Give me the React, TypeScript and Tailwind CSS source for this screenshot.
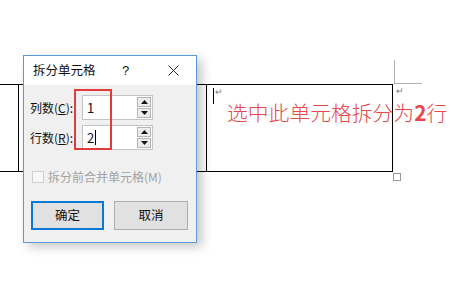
import React from 'react'

const FONT = { fontFamily: '"Noto Sans CJK SC", "Noto Sans", sans-serif' }

function Spinner() {
  return (
    <div className="flex h-full w-[15px] flex-col gap-[1px] py-[1px] pr-[1px]">
      <div className="flex flex-1 items-center justify-center border border-[#b5b5b5] bg-[#ececec]">
        <svg width="7" height="4" viewBox="0 0 7 4">
          <polygon points="3.5,0 7,4 0,4" fill="#111" />
        </svg>
      </div>
      <div className="flex flex-1 items-center justify-center border border-[#b5b5b5] bg-[#ececec]">
        <svg width="7" height="4" viewBox="0 0 7 4">
          <polygon points="0,0 7,0 3.5,4" fill="#111" />
        </svg>
      </div>
    </div>
  )
}

function NumberRow({ label, hotkey, value, caret }: { label: string; hotkey: string; value: string; caret?: boolean }) {
  return (
    <div className="flex h-[25px] items-center">
      <div className="w-[52px] text-[12px] text-[#111]">
        {label}(<span className="underline">{hotkey}</span>):
      </div>
      <div className="flex h-full w-[71px] items-center border border-[#c4c4c4] bg-white">
        <div className="flex flex-1 items-center pl-[4px] text-[13px] text-[#111]">
          {value}
          {caret && <span className="ml-[1px] inline-block h-[15px] w-[1px] bg-black" />}
        </div>
        <Spinner />
      </div>
    </div>
  )
}

function SplitDialog() {
  return (
    <div className="absolute left-[23px] top-[55px] flex h-[188px] w-[174px] flex-col border border-[#5b9bd5] bg-[#f0f0f0] shadow-[5px_4px_10px_rgba(0,0,0,0.22)]">
      {/* Title bar */}
      <div className="flex h-[29px] items-center bg-white pl-[9px] text-[12.5px] text-[#111]">
        <span className="flex-1">拆分单元格</span>
        <span className="w-[46px] text-[13px]" style={{ fontFamily: '"Liberation Sans", sans-serif' }}>?</span>
        <svg className="mr-[17px]" width="11" height="11" viewBox="0 0 11 11" stroke="#222" strokeWidth="1">
          <line x1="0.5" y1="0.5" x2="10.5" y2="10.5" />
          <line x1="10.5" y1="0.5" x2="0.5" y2="10.5" />
        </svg>
      </div>

      {/* Body */}
      <div className="relative flex flex-1 flex-col pl-[6px] pt-[10px]">
        <div className="flex flex-col gap-[5px]">
          <NumberRow label="列数" hotkey="C" value="1" />
          <NumberRow label="行数" hotkey="R" value="2" caret />
        </div>

        <div className="mt-[21px] flex h-[12px] items-center gap-[4px] pl-[2px]">
          <div className="h-[12px] w-[12px] border border-[#cfcfcf] bg-[#f7f7f7]" />
          <span className="text-[12px] text-[#a2a2a2]">拆分前合并单元格(M)</span>
        </div>

        <div className="mt-[18px] flex gap-[10px] pl-[1px]">
          <button className="flex h-[29px] w-[73px] items-center justify-center border-2 border-[#0a78d4] bg-[#e1e1e1] text-[12.5px] text-[#111]">
            确定
          </button>
          <button className="flex h-[29px] w-[74px] items-center justify-center border border-[#adadad] bg-[#e1e1e1] text-[12.5px] text-[#111]">
            取消
          </button>
        </div>

        {/* red highlight */}
        <div className="absolute left-[50px] top-[4px] h-[61px] w-[38px] border-2 border-[#e03c3c]" />
      </div>
    </div>
  )
}

export default function App() {
  return (
    <div className="relative h-[285px] w-[452px] overflow-hidden bg-white" style={FONT}>
      {/* Document table */}
      <div className="pt-[84px]">
        <div className="flex h-[88px] w-[393px] border-y border-black">
          <div className="w-[19px] border-r border-black" />
          <div className="w-[188px] border-r border-black" />
          <div className="relative flex-1 border-r border-black">
            <span className="absolute left-[6px] top-[3px] h-[16px] w-[1px] bg-black" />
            <span className="absolute left-[8px] top-[2px] text-[9px] leading-none text-[#777]">↵</span>
          </div>
        </div>
      </div>

      {/* end-of-row mark & corner guides */}
      <span className="absolute left-[396px] top-[86px] text-[9px] leading-none text-[#777]">↵</span>
      <div className="absolute left-[394px] top-[60px] h-[24px] w-[28px] border-b border-l border-[#b0b0b0]" />
      <div className="absolute left-[393px] top-[173px] h-[8px] w-[8px] border border-[#999]" />

      {/* annotation */}
      <div className="absolute left-[227px] top-[99px] whitespace-nowrap text-[20.8px] font-light leading-[26px] text-[#e5484d]">
        选中此单元格拆分为<span className="font-bold">2</span>行
      </div>

      <SplitDialog />
    </div>
  )
}
